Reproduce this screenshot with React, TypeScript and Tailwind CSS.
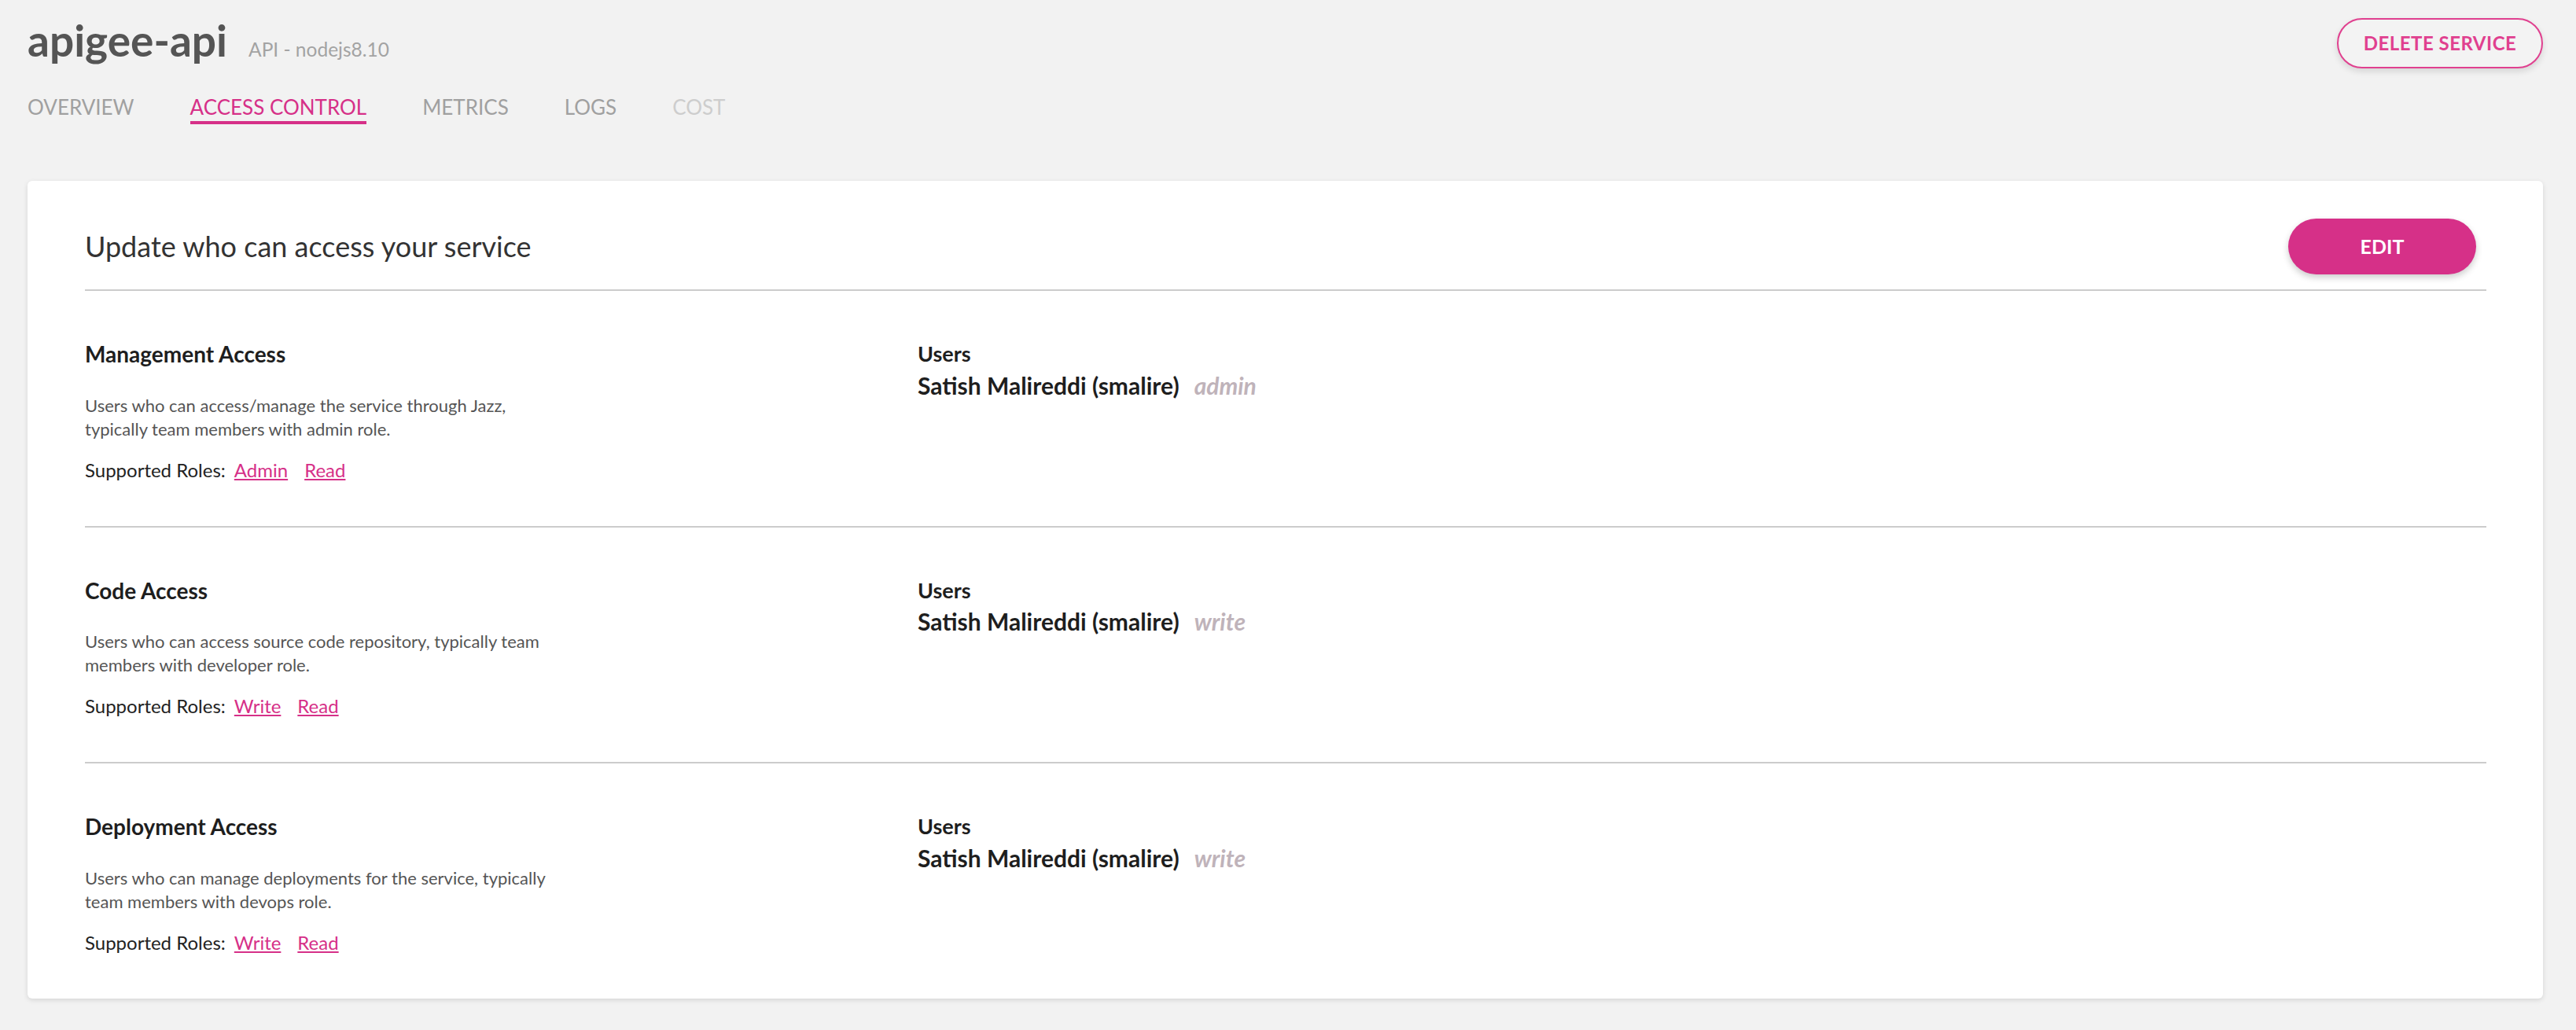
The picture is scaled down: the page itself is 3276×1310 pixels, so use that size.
import React from "react";

const sections = [
  {
    title: "Management Access",
    desc: "Users who can access/manage the service through Jazz, typically team members with admin role.",
    roles: ["Admin", "Read"],
    user: "Satish Malireddi (smalire)",
    role: "admin",
  },
  {
    title: "Code Access",
    desc: "Users who can access source code repository, typically team members with developer role.",
    roles: ["Write", "Read"],
    user: "Satish Malireddi (smalire)",
    role: "write",
  },
  {
    title: "Deployment Access",
    desc: "Users who can manage deployments for the service, typically team members with devops role.",
    roles: ["Write", "Read"],
    user: "Satish Malireddi (smalire)",
    role: "write",
  },
];

const tabs = [
  { label: "OVERVIEW", state: "normal" },
  { label: "ACCESS CONTROL", state: "active" },
  { label: "METRICS", state: "normal" },
  { label: "LOGS", state: "normal" },
  { label: "COST", state: "disabled" },
];

export default function App() {
  return (
    <div className="min-h-[1310px] bg-[#f2f2f2] font-['Lato','Liberation_Sans',sans-serif] pl-[35px] pr-[42px] pt-[18px] pb-[40px]">
      {/* Header */}
      <div className="flex justify-between items-start">
        <div className="flex flex-col">
          <div className="flex items-baseline">
            <h1 className="text-[55px] leading-[1.2] font-bold text-[#555555]">apigee-api</h1>
            <span className="ml-[27px] text-[24.5px] text-[#a3a3a3]">API - nodejs8.10</span>
          </div>
          <div className="flex gap-[71px] mt-[37px]">
            {tabs.map((t) => (
              <div key={t.label} className="flex flex-col">
                <span
                  className={
                    t.state === "active"
                      ? "text-[26px] leading-[1.2] text-[#d63088]"
                      : t.state === "disabled"
                      ? "text-[26px] leading-[1.2] text-[#cdcdcd]"
                      : "text-[26px] leading-[1.2] text-[#a0a0a0]"
                  }
                >
                  {t.label}
                </span>
                <div
                  className={
                    t.state === "active"
                      ? "mt-[2px] h-[4px] bg-[#d63088]"
                      : "mt-[2px] h-[4px] bg-transparent"
                  }
                />
              </div>
            ))}
          </div>
        </div>
        <button className="mt-[5px] w-[262px] h-[64px] rounded-full border-2 border-[#e0408f] bg-[#f3f3f3] text-[#e0408f] text-[24px] font-bold tracking-[0.5px] shadow-[0_4px_8px_rgba(0,0,0,0.12)]">
          DELETE SERVICE
        </button>
      </div>

      {/* Card */}
      <div className="mt-[72px] bg-white rounded-[6px] shadow-[0_2px_6px_rgba(0,0,0,0.12)] pl-[73px] pr-[72px] pt-[48px]">
        <div className="flex items-center justify-between h-[71px] mb-[19px]">
          <h2 className="text-[36px] leading-[1.2] text-[#333333]">Update who can access your service</h2>
          <button className="mr-[13px] w-[239px] h-[71px] rounded-full bg-[#d63088] text-white text-[25px] font-bold shadow-[0_4px_8px_rgba(0,0,0,0.2)]">
            EDIT
          </button>
        </div>
        {sections.map((s) => (
          <div key={s.title} className="border-t-2 border-[#cccccc] pt-[64px] pb-[56px] flex">
            <div className="w-[1059px] shrink-0">
              <h3 className="text-[28px] leading-[1.2] font-bold text-[#1e1e1e]">{s.title}</h3>
              <p className="mt-[33px] w-[600px] text-[22px] leading-[30px] text-[#555555]">{s.desc}</p>
              <div className="mt-[22px] text-[24px] leading-[30px] text-[#222222] flex">
                <span>Supported Roles:</span>
                <a className="ml-[11px] text-[#d63088] underline">{s.roles[0]}</a>
                <a className="ml-[21px] text-[#d63088] underline">{s.roles[1]}</a>
              </div>
            </div>
            <div className="flex flex-col">
              <span className="text-[27px] leading-[1.2] font-bold text-[#1e1e1e]">Users</span>
              <div className="mt-[5px] flex items-baseline">
                <span className="text-[30px] leading-[1.2] font-bold text-[#1e1e1e]">{s.user}</span>
                <span className="ml-[19px] text-[30px] leading-[1.2] font-bold italic text-[#bfb3ba]">{s.role}</span>
              </div>
            </div>
          </div>
        ))}
      </div>
    </div>
  );
}
